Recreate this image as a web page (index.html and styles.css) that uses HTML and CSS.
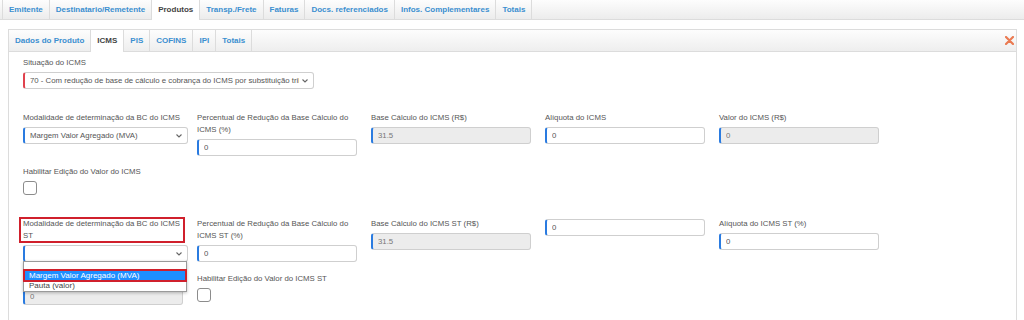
FILE: index.html
```html
<!DOCTYPE html>
<html lang="pt-BR">
<head>
    <meta charset="UTF-8">
    <title>Produtos - ICMS</title>
    <link rel="stylesheet" href="styles.css">
</head>
<body>
    <div class="top-tabs">
        <div class="tab">Emitente</div>
        <div class="tab">Destinatario/Remetente</div>
        <div class="tab active">Produtos</div>
        <div class="tab">Transp./Frete</div>
        <div class="tab">Faturas</div>
        <div class="tab">Docs. referenciados</div>
        <div class="tab">Infos. Complementares</div>
        <div class="tab">Totais</div>
    </div>

    <div class="panel">
        <div class="panel-head">
            <div class="tab">Dados do Produto</div>
            <div class="tab active">ICMS</div>
            <div class="tab">PIS</div>
            <div class="tab">COFINS</div>
            <div class="tab">IPI</div>
            <div class="tab">Totais</div>
            <div class="close">
                <svg width="9" height="9" viewBox="0 0 9 9">
                    <path d="M1 1L8 8M8 1L1 8" stroke="#ea7a52" stroke-width="2.2" stroke-linecap="round"/>
                </svg>
            </div>
        </div>

        <div class="content">
            <!-- Situação -->
            <div class="row gap-lg">
                <div class="field">
                    <label>Situação do ICMS</label>
                    <div class="control select wide required">
                        <span>70 - Com redução de base de cálculo e cobrança do ICMS por substituição tributária</span>
                        <svg class="chev" width="6" height="4" viewBox="0 0 6 4"><path d="M0.5 0.5L3 3L5.5 0.5" fill="none" stroke="#666" stroke-width="1.1"/></svg>
                    </div>
                </div>
            </div>

            <!-- ICMS -->
            <div class="row grid gap-sm">
                <div class="field">
                    <label>Modalidade de determinação da BC do ICMS</label>
                    <div class="control select">
                        <span>Margem Valor Agregado (MVA)</span>
                        <svg class="chev" width="6" height="4" viewBox="0 0 6 4"><path d="M0.5 0.5L3 3L5.5 0.5" fill="none" stroke="#666" stroke-width="1.1"/></svg>
                    </div>
                </div>
                <div class="field">
                    <label>Percentual de Redução da Base Cálculo do ICMS (%)</label>
                    <input class="control" type="text" value="0">
                </div>
                <div class="field">
                    <label>Base Cálculo do ICMS (R$)</label>
                    <input class="control disabled" type="text" value="31.5" disabled>
                </div>
                <div class="field">
                    <label>Alíquota do ICMS</label>
                    <input class="control" type="text" value="0">
                </div>
                <div class="field">
                    <label>Valor do ICMS (R$)</label>
                    <input class="control disabled" type="text" value="0" disabled>
                </div>
            </div>

            <div class="row gap-lg">
                <div class="field">
                    <label>Habilitar Edição do Valor do ICMS</label>
                    <input class="check" type="checkbox">
                </div>
            </div>

            <!-- ICMS ST -->
            <div class="row grid">
                <div class="field open">
                    <label class="marked">Modalidade de determinação da BC do ICMS ST</label>
                    <div class="control select">
                        <span></span>
                        <svg class="chev" width="6" height="4" viewBox="0 0 6 4"><path d="M0.5 0.5L3 3L5.5 0.5" fill="none" stroke="#666" stroke-width="1.1"/></svg>
                    </div>
                    <div class="dropdown">
                        <div class="opt empty"></div>
                        <div class="opt selected">Margem Valor Agregado (MVA)</div>
                        <div class="opt">Pauta (valor)</div>
                    </div>
                </div>
                <div class="field">
                    <label>Percentual de Redução da Base Cálculo do ICMS ST (%)</label>
                    <input class="control" type="text" value="0">
                </div>
                <div class="field">
                    <label>Base Cálculo do ICMS ST (R$)</label>
                    <input class="control disabled" type="text" value="31.5" disabled>
                </div>
                <div class="field">
                    <input class="control nolabel" type="text" value="0">
                </div>
                <div class="field">
                    <label>Alíquota do ICMS ST (%)</label>
                    <input class="control" type="text" value="0">
                </div>
            </div>

            <div class="row grid">
                <div class="field">
                    <!-- label sits under the open list -->
                    <label>&nbsp;</label>
                    <input class="control disabled" type="text" value="0" disabled>
                </div>
                <div class="field">
                    <label>Habilitar Edição do Valor do ICMS ST</label>
                    <input class="check" type="checkbox">
                </div>
            </div>
        </div>
    </div>
</body>
</html>
```

FILE: styles.css
```css
* {
    box-sizing: border-box;
}

body {
    margin: 0;
    background: #fff;
    color: #555;
    font-family: 'Liberation Sans', Arial, sans-serif;
    overflow: hidden;
}

/* tab bars */
.top-tabs {
    display: flex;
    height: 20px;
    padding-left: 2px;
    border-bottom: 1px solid #dcdcdc;
    background: linear-gradient(#fdfdfd, #ececec);
}

.tab {
    padding: 0 6px;
    border-right: 1px solid #dcdcdc;
    font-size: 8px;
    font-weight: bold;
    line-height: 19px;
    color: #3b8fd0;
    white-space: nowrap;
}

.top-tabs .tab:first-child {
    border-left: 1px solid #dcdcdc;
}

.tab.active {
    background: #fff;
    color: #444;
    height: calc(100% + 1px);
}

.panel {
    margin: 9px 7px 0 8px;
    border: 1px solid #dcdcdc;
    border-bottom: none;
    height: calc(100vh - 29px);
}

.panel-head {
    display: flex;
    height: 22px;
    border-bottom: 1px solid #dcdcdc;
    background: linear-gradient(#fdfdfd, #eeeeee);
}

.panel-head .tab {
    line-height: 21px;
}

.close {
    margin-left: auto;
    padding-right: 2px;
    display: flex;
    align-items: center;
}

/* form */
.content {
    padding: 5px 14px 0;
}

.row {
    margin-bottom: 11px;
}

.row.gap-lg {
    margin-bottom: 23px;
}

.row.gap-sm {
    margin-bottom: 10px;
}

.grid {
    display: grid;
    grid-template-columns: repeat(5, 160px);
    column-gap: 14px;
    align-items: start;
}

.field {
    position: relative;
}

.field label {
    display: block;
    font-size: 7.8px;
    line-height: 12px;
    margin-bottom: 3px;
    color: #555;
}

.control {
    display: block;
    width: 160px;
    height: 17px;
    margin: 0;
    padding: 0 5px;
    border: 1px solid #cfcfcf;
    border-left: 2px solid #2a7be0;
    border-radius: 3px;
    background: #fff;
    color: #555;
    font-family: inherit;
    font-size: 7.8px;
    outline: none;
}

.control.disabled {
    background: #ececec;
    color: #777;
}

.control.nolabel {
    margin-top: 1px;
}

.select {
    display: flex;
    align-items: center;
    width: 165px;
    white-space: nowrap;
    overflow: hidden;
}

.select span {
    flex: 1;
    overflow: hidden;
}

.select .chev {
    flex-shrink: 0;
    margin-left: 3px;
}

.select.wide {
    width: 291px;
}

.control.required {
    border-left-color: #e0424e;
}

.check {
    appearance: none;
    display: block;
    width: 14px;
    height: 14px;
    margin: 2px 0 0;
    border: 1px solid #8c8c8c;
    border-radius: 3px;
    background: #fff;
}

/* annotation */
.marked {
    position: relative;
}

.marked::after {
    content: '';
    position: absolute;
    left: -4px;
    right: -2px;
    top: -1px;
    bottom: -1px;
    border: 2px solid #d0202c;
}

/* open select list */
.dropdown {
    position: absolute;
    top: calc(100% - 1px);
    left: 0;
    width: 164px;
    border: 1px solid #9a9a9a;
    background: #fff;
    box-shadow: 0 1px 3px rgba(0, 0, 0, 0.25);
    z-index: 5;
}

.opt {
    height: 10px;
    padding-left: 5px;
    font-size: 8px;
    line-height: 10px;
    color: #444;
    white-space: nowrap;
}

.opt.empty {
    height: 8px;
}

.opt.selected {
    height: 11px;
    line-height: 11px;
    background: #1e8fff;
    color: #fff;
    outline: 2px solid #d0202c;
    outline-offset: -1px;
}
```
